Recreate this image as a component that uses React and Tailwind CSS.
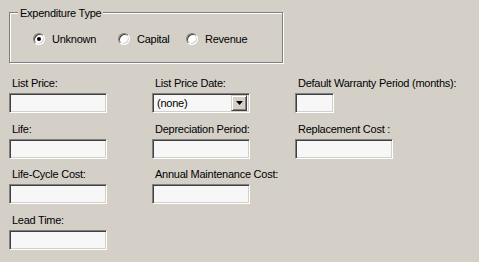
import React from 'react';

const font = { fontFamily: '"Liberation Sans", Arial, sans-serif' };

function TextBox({ width = 'w-[98px]' }) {
  return (
    <div
      className={`${width} h-[20px] bg-[#f7f7f7] border border-t-[#808080] border-l-[#808080] border-b-white border-r-white shadow-[inset_1px_1px_0_#404040,inset_-1px_-1px_0_#d4d0c8]`}
    />
  );
}

function DropDown({ value }) {
  return (
    <div className="w-[98px] h-[20px] flex items-center bg-[#f7f7f7] border border-t-[#808080] border-l-[#808080] border-b-white border-r-white shadow-[inset_1px_1px_0_#404040,inset_-1px_-1px_0_#d4d0c8] pl-[1px] pr-[2px] py-[1px]">
      <span className="flex-1 pl-[3px] text-[11px] leading-[13px] text-black">{value}</span>
      <div className="w-[16px] h-[16px] flex items-center justify-center bg-[#d4d0c8] border border-t-[#d4d0c8] border-l-[#d4d0c8] border-b-[#404040] border-r-[#404040] shadow-[inset_1px_1px_0_#fff,inset_-1px_-1px_0_#808080]">
        <svg width="7" height="4" viewBox="0 0 7 4">
          <path d="M0 0h7L3.5 4z" fill="#000" />
        </svg>
      </div>
    </div>
  );
}

function Radio({ label, checked, width }) {
  return (
    <label className={`${width} flex items-center gap-[7px]`}>
      <span className="w-[12px] h-[12px] rounded-full flex items-center justify-center bg-white border border-t-[#808080] border-l-[#808080] border-b-white border-r-white shadow-[inset_1px_1px_0_#404040,inset_-1px_-1px_0_#d4d0c8]">
        {checked && <span className="w-[4px] h-[4px] rounded-full bg-black" />}
      </span>
      <span className="text-[11px] leading-[13px] text-black">{label}</span>
    </label>
  );
}

function Field({ label, children }) {
  return (
    <div className="flex flex-col gap-[3px]">
      <span className="pl-[3px] text-[11px] leading-[13px] text-black whitespace-nowrap">{label}</span>
      {children}
    </div>
  );
}

export default function App() {
  return (
    <div className="w-[479px] h-[262px] bg-[#d4d0c8] pt-[12px] pl-[9px] overflow-hidden tracking-[-0.25px]" style={font}>
      <div className="relative w-[274px] h-[51px] border border-[#808080] shadow-[inset_1px_1px_0_#fff,1px_1px_0_#fff] flex items-center pl-[23px] pt-[3px]">
        <span className="absolute -top-[6px] left-[8px] px-[2px] bg-[#d4d0c8] text-[11px] leading-[13px] text-black">
          Expenditure Type
        </span>
        <Radio label="Unknown" checked width="w-[85px]" />
        <Radio label="Capital" width="w-[68px]" />
        <Radio label="Revenue" width="w-[90px]" />
      </div>

      <div className="mt-[14px] grid grid-cols-[143px_143px_143px] gap-y-[9.5px]">
        <Field label="List Price:">
          <TextBox />
        </Field>
        <Field label="List Price Date:">
          <DropDown value="(none)" />
        </Field>
        <Field label="Default Warranty Period (months):">
          <TextBox width="w-[39px]" />
        </Field>

        <Field label="Life:">
          <TextBox />
        </Field>
        <Field label="Depreciation Period:">
          <TextBox />
        </Field>
        <Field label="Replacement Cost :">
          <TextBox />
        </Field>

        <Field label="Life-Cycle Cost:">
          <TextBox />
        </Field>
        <Field label="Annual Maintenance Cost:">
          <TextBox />
        </Field>
        <div />

        <Field label="Lead Time:">
          <TextBox />
        </Field>
      </div>
    </div>
  );
}
